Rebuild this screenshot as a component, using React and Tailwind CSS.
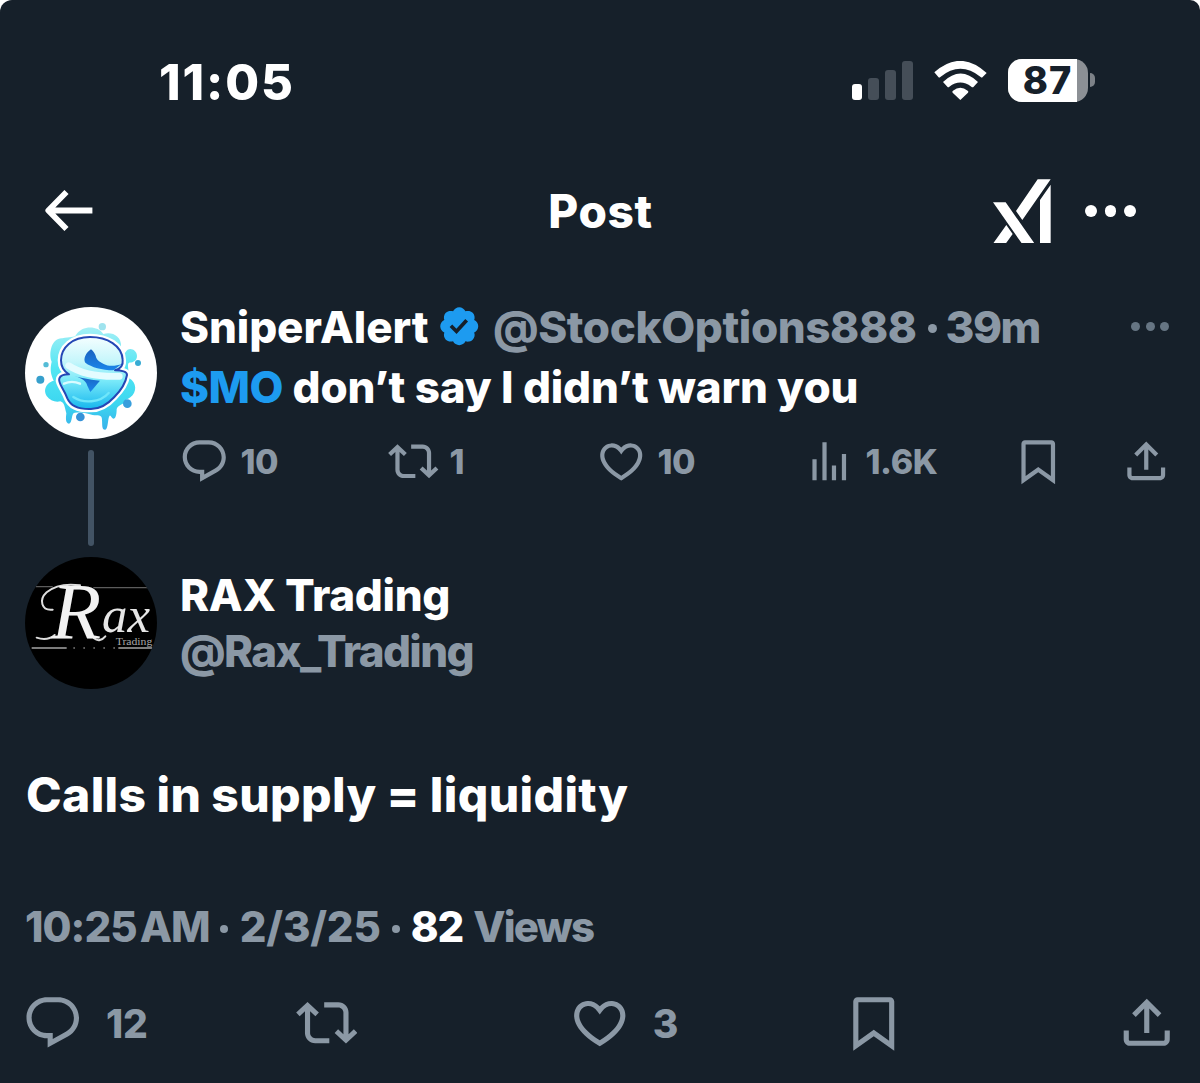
import clsx from "clsx";

const PATHS = {
  reply:
    "M1.751 10c0-4.42 3.584-8 8.005-8h4.366c4.49 0 8.129 3.64 8.129 8.13 0 2.96-1.607 5.68-4.196 7.11l-8.054 4.46v-3.69h-.067c-4.49.1-8.183-3.51-8.183-8.01zm8.005-6c-3.317 0-6.005 2.69-6.005 6 0 3.37 2.77 6.08 6.138 6.01l.351-.01h1.761v2.3l5.087-2.81c1.951-1.08 3.163-3.13 3.163-5.36 0-3.39-2.744-6.13-6.129-6.13H9.756z",
  repost:
    "M4.5 3.88l4.432 4.14-1.364 1.46L5.5 7.55V16c0 1.1.896 2 2 2H13v2H7.5c-2.209 0-4-1.79-4-4V7.55L1.432 9.48.068 8.02 4.5 3.88zM16.5 6H11V4h5.5c2.209 0 4 1.79 4 4v8.45l2.068-1.93 1.364 1.46-4.432 4.14-4.432-4.14 1.364-1.46 2.068 1.93V8c0-1.1-.896-2-2-2z",
  like:
    "M16.697 5.5c-1.222-.06-2.679.51-3.89 2.16l-.805 1.09-.806-1.09C9.984 6.01 8.526 5.44 7.304 5.5c-1.243.07-2.349.78-2.91 1.91-.552 1.12-.633 2.78.479 4.82 1.074 1.97 3.257 4.27 7.129 6.61 3.87-2.34 6.052-4.64 7.126-6.61 1.111-2.04 1.03-3.7.477-4.82-.561-1.13-1.666-1.84-2.908-1.91zm4.187 7.69c-1.351 2.48-4.001 5.12-8.379 7.67l-.503.3-.504-.3c-4.379-2.55-7.029-5.19-8.382-7.67-1.36-2.5-1.41-4.86-.514-6.67.887-1.79 2.647-2.91 4.601-3.01 1.651-.09 3.368.56 4.798 2.01 1.429-1.45 3.146-2.1 4.796-2.01 1.954.1 3.714 1.22 4.601 3.01.896 1.81.846 4.17-.514 6.67z",
  views:
    "M8.75 21V3h2v18h-2zM18 21V8.5h2V21h-2zM4 21l.004-10h2L6 21H4zm9.248 0v-7h2v7h-2z",
  bookmark:
    "M4 3.7C4 2.76 4.76 2 5.7 2h12.6c.94 0 1.7.76 1.7 1.7v19.24l-8-5.71-8 5.71V3.7zM6 4v15.06l6-4.29 6 4.29V4H6z",
  share:
    "M12 2.59l5.7 5.7-1.41 1.42L13 6.41V16h-2V6.41l-3.3 3.3-1.41-1.42L12 2.59zM21 15l-.02 3.51c0 1.38-1.12 2.49-2.5 2.49H5.5C4.11 21 3 19.88 3 18.5V15h2v3.5c0 .28.22.5.5.5h12.98c.28 0 .5-.22.5-.5L19 15h2z",
};

function Icon({ name, className }) {
  return (
    <svg viewBox="0 0 24 24" fill="currentColor" className={clsx("shrink-0", className)}>
      <path d={PATHS[name]} />
    </svg>
  );
}

function Dots({ className, dot }) {
  return (
    <div className={clsx("flex items-center", className)}>
      <span className={clsx("rounded-full", dot)} />
      <span className={clsx("rounded-full", dot)} />
      <span className={clsx("rounded-full", dot)} />
    </div>
  );
}

function StatusBar() {
  return (
    <div className="flex h-[164px] items-center justify-between pr-[105px] pl-[159px]">
      <span className="text-[49px] leading-none tracking-[1.9px]">11:05</span>
      <div className="mb-[4px] flex h-[43px] items-center">
        <div className="flex h-[39px] items-end gap-[6px]">
          <span className="h-[15.5px] w-[10.7px] rounded-[3px] bg-white" />
          <span className="h-[22px] w-[10.7px] rounded-[3px] bg-[#454e58]" />
          <span className="h-[30px] w-[10.7px] rounded-[3px] bg-[#454e58]" />
          <span className="h-[38.5px] w-[10.7px] rounded-[3px] bg-[#454e58]" />
        </div>
        <svg viewBox="0 0 159 117" className="ml-[21px] h-[39px] w-[53px]" fill="white">
          <path d="M79 117 56 95q-3-3 1-6 22-18 44 0 4 3 1 6z" />
          <path d="M27 63 40 77q3 3 6 0 33-25 66 0 4 3 7 0l13-14q-52-51-105 0z" />
          <path d="M1 34 13 48q3 3 6 0 60-49 121 0 3 3 6 0l12-12Q79-36 1 34z" />
        </svg>
        <div className="ml-[21px] flex h-[43px] w-[80px] rounded-[14px] bg-[#8c9095]">
          <span className="flex w-[69px] items-center justify-center rounded-l-[14px] bg-white pl-[11px] text-[38px] leading-none tracking-[1px] text-[#16202a]">
            87
          </span>
        </div>
        <span className="ml-[2.5px] h-[14px] w-[5px] rounded-r-full bg-[#7d8288]" />
      </div>
    </div>
  );
}

function Header() {
  return (
    <header className="grid h-[94px] grid-cols-[1fr_auto_1fr] items-center pr-[64px] pl-[44px]">
      <svg viewBox="0 0 49 42" className="h-[42px] w-[49px]" fill="none" stroke="white" strokeWidth="5.8">
        <path d="M48.4 20.5H5M22.5 2 4.300 20.5l18.200 18.500" strokeLinejoin="round" />
      </svg>
      <h1 className="ml-[21px] text-[46px] leading-none tracking-[0.600px]">Post</h1>
      <div className="flex items-center justify-end">
        <svg viewBox="519 444 174 194" className="h-[64.700px] w-[58px]" fill="white">
          <path d="M519 514h38l87 124h-38zM653 445h39l-85 122-19-27zM519 638h38l21-29-19-27zM692 461v177h-32V507z" />
        </svg>
        <Dots className="ml-[34px] gap-[8px]" dot="size-[11.700px] bg-white" />
      </div>
    </header>
  );
}

const MARK =
  "M338 194C336 152 292 126 240 126c-54 0-87 32-87 70 0 22 10 34 24 42-14 0-26 4-29 12-5 14 13 31 24 60 12 28 40 33 71 32 28 0 50-14 70-36 20-20 34-42 38-66 1-10-16-14-36-14 16-4 25-14 23-32z";

function SplashAvatar() {
  return (
    <svg viewBox="45 36 396 396" className="size-[132px] shrink-0">
      <defs>
        <linearGradient id="splash" x1="0" y1="0" x2="0" y2="1">
          <stop offset="0" stopColor="#a5eff6" />
          <stop offset="0.4" stopColor="#52e6f3" />
          <stop offset="0.75" stopColor="#3cd6f0" />
          <stop offset="1" stopColor="#38b2ea" />
        </linearGradient>
        <linearGradient id="mark" x1="0" y1="0" x2="0" y2="1">
          <stop offset="0" stopColor="#f4feff" />
          <stop offset="0.35" stopColor="#c4f6fb" />
          <stop offset="0.6" stopColor="#7beaf9" />
          <stop offset="1" stopColor="#16b7ee" />
        </linearGradient>
        <linearGradient id="deep" x1="0" y1="0" x2="0" y2="1">
          <stop offset="0" stopColor="#1a62c0" />
          <stop offset="1" stopColor="#1a86ea" />
        </linearGradient>
      </defs>
      <circle cx="243" cy="234" r="198" fill="white" />
      <path
        fill="url(#splash)"
        d="M198 120C215 92 262 90 280 117c25-8 55 5 53 38 0 15-4 22-4 22 10 2 14-1 18-6 8-17 34-8 34 12 0 18-18 20-24 20-7 4 0 25 1 47 22 12 24 42 3 57-12 8-20 10-15 16 0 0-24 8-26 19 0 9-1 28-9 29-7 0-8-11-12-9-6 5-4 40-13 42-11 1-9-14-10-30 0-10-5-13-16-13-20 0-30-12-66-8-11 2-6 30-17 33-12-1-9-20-8-31-5-18-5-32-18-36-25 8-62-22-38-51 6-8 16-10 18-11-8-19-12-31-6-57-10-25 0-72 32-70 21-6 36-1 41-10z"
      />
      <circle cx="277" cy="95" r="11" fill="#9fe3ee" />
      <circle cx="108" cy="209" r="8" fill="#54bcd6" />
      <circle cx="91" cy="254" r="12" fill="#369fcc" />
      <circle cx="384" cy="204" r="9" fill="#38abd3" />
      <circle cx="352" cy="326" r="13" fill="#389edc" />
      <circle cx="211" cy="366" r="13" fill="#3692d8" />
      <g strokeLinejoin="round">
        <path d={MARK} fill="white" stroke="white" strokeWidth="20" />
        <path d={MARK} fill="url(#mark)" stroke="#2447b5" strokeWidth="6" />
      </g>
      <path d="M176 212c40 26 96 34 152 32" fill="none" stroke="#e4fcff" strokeWidth="20" strokeLinecap="round" />
      <path
        d="M243 163c-16 10-24 30-17 40 18 14 50 22 84 23l26-20c-18 8-40 9-55 1-12-6-18-10-22-18-3-12-9-21-16-26z"
        fill="url(#deep)"
      />
      <path d="M172 238c30 6 50 14 57 27 4 10 8 18 12 26 9-11 18-21 29-34-34-2-62-10-98-19z" fill="url(#deep)" />
      <path d="M162 266c14-6 34-6 48 0" fill="none" stroke="#d9fbff" strokeWidth="7" strokeLinecap="round" />
      <path d="M190 306c30 20 80 18 106-12" fill="none" stroke="#6fe6fa" strokeWidth="7" strokeLinecap="round" />
    </svg>
  );
}

function RaxAvatar() {
  return (
    <svg viewBox="45 50 396 396" className="size-[132px] shrink-0">
      <defs>
        <clipPath id="disc">
          <circle cx="243" cy="248" r="198" />
        </clipPath>
      </defs>
      <g clipPath="url(#disc)" className="font-['Liberation_Serif',serif] font-normal">
        <rect x="45" y="50" width="396" height="396" fill="black" />
        <path d="M78 139h50M250 142h163" stroke="#5c5c5c" strokeWidth="4" />
        <path d="M65 323h105M325 323h102" stroke="#a5a5a5" strokeWidth="4" />
        <path d="M190 323h128" stroke="#777" strokeWidth="4" strokeDasharray="5 25" />
        <path
          d="M128 208c-34 4-42-30-18-52 26-22 62-26 100-21M80 292c24 8 40 4 54-8M252 294c12 10 24 6 34-6"
          fill="none"
          stroke="#dedede"
          strokeWidth="6"
          strokeLinecap="round"
        />
        <text x="124" y="296" fill="#f2f2f2" fontSize="244" fontStyle="italic" textLength="150" lengthAdjust="spacingAndGlyphs">
          R
        </text>
        <text x="276" y="276" fill="#e6e6e6" fontSize="150" fontStyle="italic" textLength="144" lengthAdjust="spacingAndGlyphs">
          ax
        </text>
        <text x="317" y="313" fill="#a8a8a8" fontSize="34" textLength="110" lengthAdjust="spacingAndGlyphs">
          Trading
        </text>
      </g>
    </svg>
  );
}

function Verified() {
  return (
    <svg viewBox="0 0 22 22" className="ml-[8px] size-[44.500px] shrink-0" fill="#1d9bf0">
      <path d="M20.396 11c-.018-.646-.215-1.275-.57-1.816-.354-.54-.852-.972-1.438-1.246.223-.607.27-1.264.14-1.897-.131-.634-.437-1.218-.882-1.687-.47-.445-1.053-.75-1.687-.882-.633-.13-1.29-.083-1.897.14-.273-.587-.704-1.086-1.245-1.44S11.647 1.62 11 1.604c-.646.017-1.273.213-1.813.568s-.969.854-1.24 1.44c-.608-.223-1.267-.272-1.902-.14-.635.13-1.22.436-1.69.882-.445.47-.749 1.055-.878 1.688-.13.633-.08 1.29.144 1.896-.587.274-1.087.705-1.443 1.245-.356.54-.555 1.17-.574 1.817.02.647.218 1.276.574 1.817.356.54.856.972 1.443 1.245-.224.606-.274 1.263-.144 1.896.13.634.433 1.218.877 1.688.47.443 1.054.747 1.687.878.633.132 1.29.084 1.897-.136.274.586.705 1.084 1.246 1.439.54.354 1.17.551 1.816.569.647-.016 1.276-.213 1.817-.567s.972-.854 1.245-1.44c.604.239 1.266.296 1.903.164.636-.132 1.22-.447 1.68-.907.46-.46.776-1.044.908-1.681s.075-1.299-.165-1.903c.586-.274 1.084-.705 1.439-1.246.354-.54.551-1.17.569-1.816zM9.662 14.85l-3.429-3.428 1.293-1.302 2.072 2.072 4.4-4.794 1.347 1.246z" />
    </svg>
  );
}

function SmallAction({ name, count }) {
  return (
    <div className="flex items-center gap-[11px]">
      <Icon name={name} className="size-[50.500px]" />
      {count && <span className="mt-[2px] text-[34px] leading-none tracking-[-0.400px]">{count}</span>}
    </div>
  );
}

function BigAction({ name, count }) {
  return (
    <div className="flex w-[61.500px] items-center gap-[22px]">
      <Icon name={name} className="size-[61.500px]" />
      {count && <span className="mt-px text-[39px] leading-none">{count}</span>}
    </div>
  );
}

function ParentPost() {
  return (
    <article className="flex h-[299px] gap-[23px] pt-[39px] pl-[25px]">
      <div className="flex w-[132px] shrink-0 flex-col items-center pt-[10px]">
        <SplashAvatar />
        <span className="mt-[11px] h-[96px] w-[5.500px] rounded-full bg-[#425364]" />
      </div>
      <div className="flex-1 whitespace-nowrap">
        <div className="flex h-[59px] items-center pr-[31px] text-[44px] leading-none">
          <span className="tracking-[-0.100px]">SniperAlert</span>
          <Verified />
          <span className="ml-[12px] tracking-[-0.400px] text-[#8b98a5]">@StockOptions888</span>
          <span className="mt-[4px] ml-[11px] size-[9px] rounded-full bg-[#8b98a5]" />
          <span className="ml-[9px] tracking-[-1.500px] text-[#8b98a5]">39m</span>
          <Dots className="ml-auto gap-[5.800px]" dot="size-[8.700px] bg-[#667583]" />
        </div>
        <p className="mt-px h-[60px] text-[44px] leading-[60px] tracking-[-0.180px]">
          <span className="tracking-[-0.500px] text-[#1d9bf0]">$MO</span> don’t say I didn’t warn you
        </p>
        <div className="mt-[19px] -ml-px grid grid-cols-[209px_208px_208px_208.500px_108px_50px] text-[#8b98a5]">
          <SmallAction name="reply" count="10" />
          <SmallAction name="repost" count="1" />
          <SmallAction name="like" count="10" />
          <SmallAction name="views" count="1.6K" />
          <SmallAction name="bookmark" />
          <SmallAction name="share" />
        </div>
      </div>
    </article>
  );
}

function MainPost() {
  return (
    <article className="whitespace-nowrap">
      <div className="flex h-[132px] items-center gap-[23px] pl-[25px]">
        <RaxAvatar />
        <div className="text-[44px] leading-[56px]">
          <div className="tracking-[-0.300px]">RAX Trading</div>
          <div className="tracking-[-1.650px] text-[#8b98a5]">@Rax_Trading</div>
        </div>
      </div>
      <p className="mt-[76px] pl-[26px] text-[48px] leading-[60px] tracking-[0.350px] [word-spacing:-0.800px]">
        Calls in supply = liquidity
      </p>
      <div className="mt-[77px] flex h-[50px] items-center pl-[25px] text-[42px] leading-none text-[#8b98a5]">
        <span className="tracking-[-1px] [word-spacing:-5px]">10:25 AM</span>
        <span className="mt-[4px] ml-[10px] size-[8px] rounded-full bg-[#8b98a5]" />
        <span className="ml-[12px] tracking-[-0.200px]">2/3/25</span>
        <span className="mt-[4px] ml-[11px] size-[8px] rounded-full bg-[#8b98a5]" />
        <span className="ml-[11px] tracking-[-1px] text-white">82</span>
        <span className="ml-[10px] tracking-[-1.900px]">Views</span>
      </div>
      <div className="mt-[40px] flex justify-between px-[22.400px] text-[#8b98a5]">
        <BigAction name="reply" count="12" />
        <BigAction name="repost" />
        <BigAction name="like" count="3" />
        <BigAction name="bookmark" />
        <BigAction name="share" />
      </div>
    </article>
  );
}

export default function App() {
  return (
    <div className="h-[1083px] w-[1200px] overflow-hidden bg-white">
      <main className="h-full overflow-hidden rounded-tl-[12px] rounded-tr-[10px] bg-[#16202a] font-['Inter',sans-serif] font-extrabold text-white">
        <StatusBar />
        <Header />
        <ParentPost />
        <MainPost />
      </main>
    </div>
  );
}
